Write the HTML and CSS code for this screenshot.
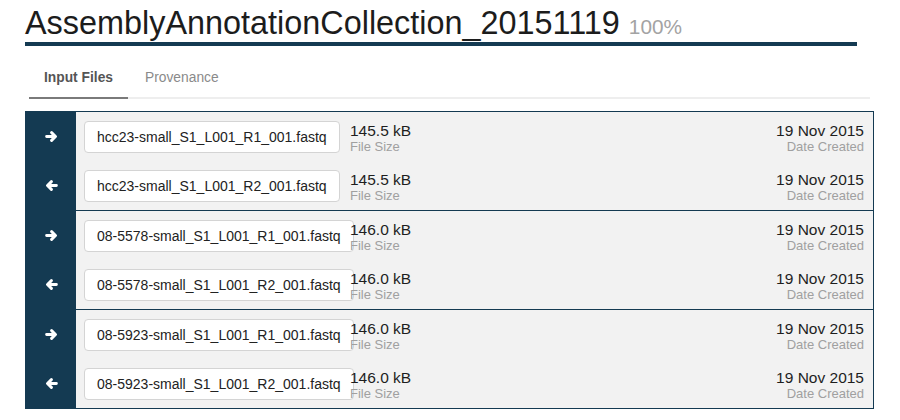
FILE: index.html
```html
<!DOCTYPE html>
<html>
<head>
<meta charset="utf-8">
<link rel="stylesheet" href="styles.css">
</head>
<body>
<div class="page">
  <h1 class="title">AssemblyAnnotationCollection_20151119 <span class="pct">100%</span></h1>
  <ul class="tabs">
    <li class="tab active">Input Files</li>
    <li class="tab">Provenance</li>
  </ul>
  <div class="files">
    <div class="group">
      <div class="row">
        <div class="dir"><svg width="13" height="11" viewBox="0 0 13 11"><path d="M1.6 5.5h8.6M6.6 1.6l3.9 3.9-3.9 3.9" class="arr"/></svg></div>
        <div class="cells">
          <div class="name-cell"><span class="name">hcc23-small_S1_L001_R1_001.fastq</span></div>
          <div class="info"><div class="val">145.5 kB</div><div class="lbl">File Size</div></div>
          <div class="info date"><div class="val">19 Nov 2015</div><div class="lbl">Date Created</div></div>
        </div>
      </div>
      <div class="row">
        <div class="dir"><svg width="13" height="11" viewBox="0 0 13 11"><path d="M11.4 5.5H2.8M6.4 1.6L2.5 5.5l3.9 3.9" class="arr"/></svg></div>
        <div class="cells">
          <div class="name-cell"><span class="name">hcc23-small_S1_L001_R2_001.fastq</span></div>
          <div class="info"><div class="val">145.5 kB</div><div class="lbl">File Size</div></div>
          <div class="info date"><div class="val">19 Nov 2015</div><div class="lbl">Date Created</div></div>
        </div>
      </div>
    </div>
    <div class="group">
      <div class="row">
        <div class="dir"><svg width="13" height="11" viewBox="0 0 13 11"><path d="M1.6 5.5h8.6M6.6 1.6l3.9 3.9-3.9 3.9" class="arr"/></svg></div>
        <div class="cells">
          <div class="name-cell"><span class="name">08-5578-small_S1_L001_R1_001.fastq</span></div>
          <div class="info"><div class="val">146.0 kB</div><div class="lbl">File Size</div></div>
          <div class="info date"><div class="val">19 Nov 2015</div><div class="lbl">Date Created</div></div>
        </div>
      </div>
      <div class="row">
        <div class="dir"><svg width="13" height="11" viewBox="0 0 13 11"><path d="M11.4 5.5H2.8M6.4 1.6L2.5 5.5l3.9 3.9" class="arr"/></svg></div>
        <div class="cells">
          <div class="name-cell"><span class="name">08-5578-small_S1_L001_R2_001.fastq</span></div>
          <div class="info"><div class="val">146.0 kB</div><div class="lbl">File Size</div></div>
          <div class="info date"><div class="val">19 Nov 2015</div><div class="lbl">Date Created</div></div>
        </div>
      </div>
    </div>
    <div class="group">
      <div class="row">
        <div class="dir"><svg width="13" height="11" viewBox="0 0 13 11"><path d="M1.6 5.5h8.6M6.6 1.6l3.9 3.9-3.9 3.9" class="arr"/></svg></div>
        <div class="cells">
          <div class="name-cell"><span class="name">08-5923-small_S1_L001_R1_001.fastq</span></div>
          <div class="info"><div class="val">146.0 kB</div><div class="lbl">File Size</div></div>
          <div class="info date"><div class="val">19 Nov 2015</div><div class="lbl">Date Created</div></div>
        </div>
      </div>
      <div class="row">
        <div class="dir"><svg width="13" height="11" viewBox="0 0 13 11"><path d="M11.4 5.5H2.8M6.4 1.6L2.5 5.5l3.9 3.9" class="arr"/></svg></div>
        <div class="cells">
          <div class="name-cell"><span class="name">08-5923-small_S1_L001_R2_001.fastq</span></div>
          <div class="info"><div class="val">146.0 kB</div><div class="lbl">File Size</div></div>
          <div class="info date"><div class="val">19 Nov 2015</div><div class="lbl">Date Created</div></div>
        </div>
      </div>
    </div>
  </div>
</div>
</body>
</html>
```
FILE: styles.css
```css
html, body {
  margin: 0;
  padding: 0;
  background: #fff;
  font-family: "Liberation Sans", Arial, sans-serif;
  color: #222;
}
.page {
  padding-left: 25px;
}
.title {
  width: 832px;
  height: 37px;
  margin: 0;
  padding-top: 5px;
  font-size: 32.4px;
  line-height: 36px;
  font-weight: normal;
  color: #1c1c1c;
  border-bottom: 4px solid #143a52;
  white-space: nowrap;
  overflow: visible;
}
.pct {
  font-size: 20.8px;
  line-height: 1;
  color: #a3a3a3;
}
.tabs {
  list-style: none;
  margin: 12px 0 0 4px;
  padding: 0;
  width: 841px;
  display: flex;
  border-bottom: 2px solid #eeeeee;
}
.tab {
  padding: 10px 15px 9px;
  font-size: 13.8px;
  line-height: 20px;
  color: #8a8a8a;
  margin-bottom: -2px;
  border-bottom: 2px solid transparent;
  margin-right: 2px;
}
.tab.active {
  font-weight: bold;
  color: #555;
  border-bottom-color: #7a7a7a;
}
.files {
  margin-top: 12px;
  width: 847px;
  border: 1px solid #143a52;
  background: #f2f2f2;
}
.group + .group {
  border-top: 1px solid #143a52;
}
.row {
  display: flex;
  height: 49px;
}
.dir {
  width: 50px;
  flex-shrink: 0;
  background: #143a52;
  display: flex;
  align-items: center;
  justify-content: center;
}
.arr {
  fill: none;
  stroke: #fff;
  stroke-width: 2.9;
  stroke-linecap: round;
  stroke-linejoin: round;
}
.cells {
  flex: 1;
  display: flex;
  align-items: center;
  padding: 0 9px 0 8px;
}
.name-cell {
  width: 266px;
  flex-shrink: 0;
  white-space: nowrap;
}
.name {
  display: inline-block;
  background: #fff;
  border: 1px solid #d4d4d4;
  border-radius: 4px;
  padding: 0 12px;
  height: 30px;
  line-height: 30px;
  font-size: 14px;
  color: #222;
}
.info {
  padding-top: 3px;
}
.val {
  font-size: 15.5px;
  line-height: 17px;
  color: #1e1e1e;
}
.lbl {
  font-size: 13px;
  line-height: 15px;
  color: #a0a0a0;
}
.date {
  margin-left: auto;
  text-align: right;
}
```
